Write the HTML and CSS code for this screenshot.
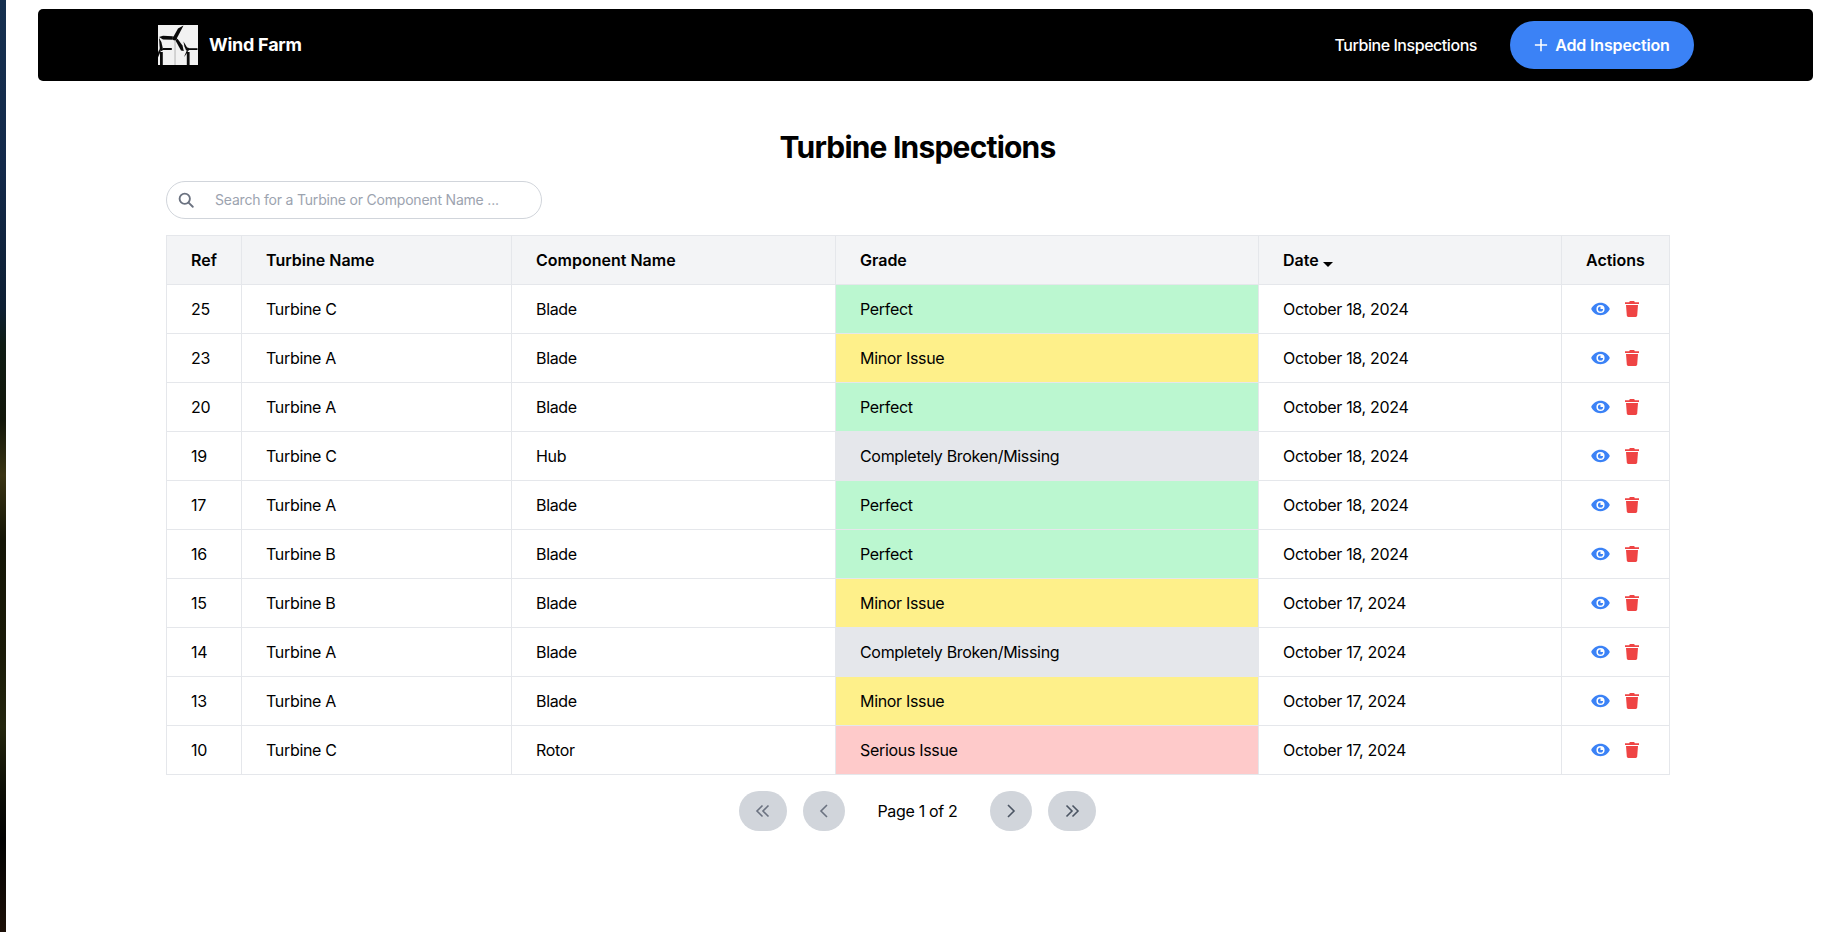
FILE: index.html
```html
<!DOCTYPE html>
<html lang="en">
<head>
    <meta charset="UTF-8">
    <meta name="viewport" content="width=device-width, initial-scale=1.0">
    <title>Turbine Inspections</title>
    <link rel="stylesheet" href="styles.css">
</head>
<body>
    <div class="desktop-edge"></div>
    <div class="page">
        <nav class="navbar">
            <a class="brand" href="#">
                <svg class="brand-logo" viewBox="0 0 40 40">
                    <rect width="40" height="40" fill="#f2f2f2"/>
                    <path fill="#c8c8c8" d="M16.300 16h1.500v24h-1.500z"/>
                    <g fill="#0a0a0a">
                        <path d="M15.500 11.500 L20 3.500 L25.500 0.500 L19 13 Z"/>
                        <path d="M14.800 11.300 L5 10.800 L1 12 L5 14.600 L14.800 14.800 Z"/>
                        <path d="M17.500 15.500 L23 25.500 L25.800 26 L24.500 20.500 L19.500 13.800 Z"/>
                        <circle cx="16.800" cy="13.300" r="2.200"/>
                        <path d="M4.800 23.200 L3.400 17 L1 13 L1.800 23.800 Z"/>
                        <path d="M5 23 H13.800 V25 H5 Z"/>
                        <path d="M2.800 26 L0 32.500 L0 27.500 L1.200 24.800 Z"/>
                        <circle cx="3.300" cy="24.200" r="1.700"/>
                        <path d="M2 27 H4.800 V40 H2 Z"/>
                        <path d="M29.400 23 L25.500 16.500 L26.400 21.500 L27.800 24.500 Z"/>
                        <path d="M31 23.200 H39.500 V25 H31 Z"/>
                        <path d="M28.800 25.600 L26 32 L28.400 29 L30 26.200 Z"/>
                        <circle cx="29.600" cy="24.300" r="1.700"/>
                        <path d="M28.800 27 H31.600 V40 H28.800 Z"/>
                    </g>
                </svg>
                <span class="brand-name">Wind Farm</span>
            </a>
            <div class="nav-links">
                <a class="nav-link" href="#">Turbine Inspections</a>
                <a class="add-btn" href="#">
                    <svg class="add-icon" viewBox="0 0 16 16"><path d="M8 1v14M1 8h14"/></svg>
                    Add Inspection
                </a>
            </div>
        </nav>

        <main class="content">
            <h1 class="title">Turbine Inspections</h1>

            <div class="search-box">
                <svg class="search-icon" viewBox="0 0 18 18"><circle cx="7.600" cy="7.600" r="5.800"/><path d="M11.900 11.900L16.600 16.600"/></svg>
                <input class="search-input" type="text" placeholder="Search for a Turbine or Component Name ...">
            </div>

            <table class="inspections">
                <colgroup>
                    <col class="col-ref"><col class="col-turbine"><col class="col-component"><col class="col-grade"><col class="col-date"><col class="col-actions">
                </colgroup>
                <thead>
                    <tr>
                        <th>Ref</th>
                        <th>Turbine Name</th>
                        <th>Component Name</th>
                        <th>Grade</th>
                        <th>Date <span class="sort-caret"></span></th>
                        <th>Actions</th>
                    </tr>
                </thead>
                <tbody id="rows"></tbody>
            </table>

            <div class="pagination">
                <button class="page-btn wide disabled"><svg viewBox="0 0 16 16"><path d="M7.500 2.500L2 8l5.500 5.500M13.500 2.500L8 8l5.500 5.500"/></svg></button>
                <button class="page-btn disabled"><svg viewBox="0 0 16 16"><path d="M11 2L5 8l6 6"/></svg></button>
                <span class="page-label">Page 1 of 2</span>
                <button class="page-btn"><svg viewBox="0 0 16 16"><path d="M5 2l6 6-6 6"/></svg></button>
                <button class="page-btn wide"><svg viewBox="0 0 16 16"><path d="M2.500 2.500L8 8l-5.500 5.500M8.500 2.500L14 8l-5.500 5.500"/></svg></button>
            </div>
        </main>
    </div>

    <script>
        const inspections = [
            [25, 'Turbine C', 'Blade', 'Perfect', 'October 18, 2024'],
            [23, 'Turbine A', 'Blade', 'Minor Issue', 'October 18, 2024'],
            [20, 'Turbine A', 'Blade', 'Perfect', 'October 18, 2024'],
            [19, 'Turbine C', 'Hub', 'Completely Broken/Missing', 'October 18, 2024'],
            [17, 'Turbine A', 'Blade', 'Perfect', 'October 18, 2024'],
            [16, 'Turbine B', 'Blade', 'Perfect', 'October 18, 2024'],
            [15, 'Turbine B', 'Blade', 'Minor Issue', 'October 17, 2024'],
            [14, 'Turbine A', 'Blade', 'Completely Broken/Missing', 'October 17, 2024'],
            [13, 'Turbine A', 'Blade', 'Minor Issue', 'October 17, 2024'],
            [10, 'Turbine C', 'Rotor', 'Serious Issue', 'October 17, 2024']
        ];
        const gradeClass = {
            'Perfect': 'grade-perfect',
            'Minor Issue': 'grade-minor',
            'Completely Broken/Missing': 'grade-broken',
            'Serious Issue': 'grade-serious'
        };
        const eye = '<svg class="icon-eye" viewBox="0 0 20 14"><path fill-rule="evenodd" d="M10 .5C5.500.5 1.900 3.200.2 7c1.700 3.800 5.300 6.500 9.800 6.500s8.100-2.700 9.800-6.500C18.100 3.200 14.500.5 10 .5zM10 11.300A4.300 4.300 0 1 1 10 2.700a4.300 4.300 0 0 1 0 8.600z"/><path d="M10 4.300A2.700 2.700 0 1 0 12.700 7H10z"/></svg>';
        const trash = '<svg class="icon-trash" viewBox="0 0 14 16"><path d="M4.800 0h4.400l.6 1.200H14v1.800H0V1.200h4.200zM1 4h12l-.8 10.600c-.1.800-.7 1.400-1.500 1.400H3.300c-.8 0-1.400-.6-1.500-1.400z"/></svg>';

        document.getElementById('rows').innerHTML = inspections.map(r => `
            <tr>
                <td>${r[0]}</td>
                <td>${r[1]}</td>
                <td>${r[2]}</td>
                <td class="${gradeClass[r[3]]}">${r[3]}</td>
                <td>${r[4]}</td>
                <td><div class="row-actions">${eye}${trash}</div></td>
            </tr>`).join('');
    </script>
</body>
</html>
```

FILE: styles.css
```css
* {
    box-sizing: border-box;
}
html, body {
    height: 100%;
}
body {
    margin: 0;
    display: flex;
    background-color: #fff;
    color: #000;
    font-family: Inter, "Liberation Sans", sans-serif;
    font-size: 16px;
    overflow: hidden;
}
a {
    color: inherit;
    text-decoration: none;
}
.desktop-edge {
    width: 6px;
    flex-shrink: 0;
    background: linear-gradient(to bottom, #16304f 0, #13294a 18%, #0d1f33 33%, #0f1c14 37%, #12160a 45%, #3a3414 51%, #141506 58%, #1a1a08 70%, #24260e 78%, #0c0d05 85%, #020202 90%, #1c1008 100%);
}
.page {
    flex: 1;
    min-width: 0;
    padding: 9px 15px 0 32px;
}

.navbar {
    height: 72px;
    display: flex;
    align-items: center;
    justify-content: space-between;
    padding: 0 119px 0 120px;
    background-color: #000;
    border-radius: 5px;
    color: #fff;
}
.brand {
    display: flex;
    align-items: center;
    gap: 11px;
}
.brand-logo {
    width: 40px;
    height: 40px;
}
.brand-name {
    padding-bottom: 2px;
    font-size: 18px;
    font-weight: 700;
    letter-spacing: -0.25px;
}
.nav-links {
    display: flex;
    align-items: center;
    gap: 33px;
}
.nav-link {
    font-weight: 500;
    letter-spacing: -0.45px;
}
.add-btn {
    width: 184px;
    height: 48px;
    display: flex;
    align-items: center;
    justify-content: center;
    gap: 7px;
    background-color: #3b82f6;
    border-radius: 24px;
    font-weight: 600;
    letter-spacing: -0.15px;
}
.add-icon {
    width: 14px;
    height: 14px;
    fill: none;
    stroke: #fff;
    stroke-width: 1.800;
}

.content {
    width: 1503px;
    margin-left: 128px;
}
.title {
    margin: 48px 0 0;
    height: 36px;
    line-height: 36px;
    font-size: 30px;
    font-weight: 700;
    letter-spacing: -0.8px;
    text-align: center;
}
.search-box {
    width: 376px;
    height: 38px;
    margin-top: 16px;
    display: flex;
    align-items: center;
    padding-left: 11px;
    border: 1px solid #d1d5db;
    border-radius: 19px;
}
.search-icon {
    width: 16px;
    height: 16px;
    flex-shrink: 0;
    fill: none;
    stroke: #6b7280;
    stroke-width: 2.100;
    stroke-linecap: round;
}
.search-input {
    flex: 1;
    min-width: 0;
    margin: 0 0 2px 19px;
    border: none;
    outline: none;
    background: transparent;
    font-family: inherit;
    font-size: 14px;
    letter-spacing: -0.2px;
}
.search-input::placeholder {
    color: #9ca3af;
    opacity: 1;
}

.inspections {
    width: 1503px;
    margin-top: 16px;
    table-layout: fixed;
    border-collapse: collapse;
    border: 1px solid #e5e7eb;
}
.col-ref { width: 75px; }
.col-turbine { width: 270px; }
.col-component { width: 324px; }
.col-grade { width: 423px; }
.col-date { width: 303px; }
.col-actions { width: 108px; }
.inspections th,
.inspections td {
    height: 49px;
    padding: 0 24px;
    border: 1px solid #e5e7eb;
    text-align: left;
    font-size: 16px;
}
.inspections td {
    letter-spacing: -0.32px;
}
.inspections th {
    background-color: #f3f4f6;
    font-weight: 600;
}
.sort-caret {
    display: inline-block;
    vertical-align: -1px;
    border-left: 5px solid transparent;
    border-right: 5px solid transparent;
    border-top: 5px solid #000;
}
.grade-perfect { background-color: #bbf7d0; }
.grade-minor { background-color: #fef08a; }
.grade-broken { background-color: #e5e7eb; }
.grade-serious { background-color: #fecaca; }
.row-actions {
    display: flex;
    align-items: center;
    gap: 15px;
    padding-left: 5px;
}
.icon-eye {
    width: 19px;
    height: 14px;
    fill: #3b82f6;
}
.icon-trash {
    width: 14px;
    height: 16px;
    fill: #ef4444;
}

.pagination {
    margin-top: 16px;
    display: flex;
    align-items: center;
    justify-content: center;
    gap: 16px;
}
.page-btn {
    width: 42px;
    height: 40px;
    display: flex;
    align-items: center;
    justify-content: center;
    padding: 0;
    border: none;
    border-radius: 20px;
    background-color: #d1d5db;
    cursor: pointer;
}
.page-btn.wide {
    width: 48px;
}
.page-btn svg {
    width: 16px;
    height: 16px;
    fill: none;
    stroke: #4b5563;
    stroke-width: 1.600;
}
.page-btn.disabled svg {
    stroke: #6b7280;
}
.page-label {
    padding: 0 16px;
    font-size: 16px;
    letter-spacing: -0.32px;
}
```
